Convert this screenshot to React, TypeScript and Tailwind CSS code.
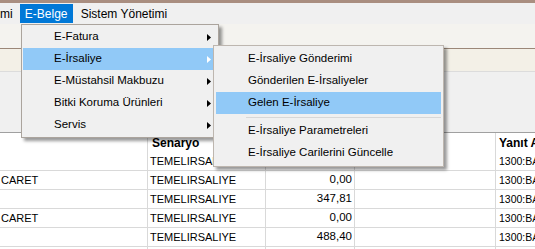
import React from 'react';

type Row = { a: string; b: string; c: string; e: string };

const rows: Row[] = [
  { a: '', b: 'TEMELIRSALIYE', c: '', e: '1300:BAŞARILI' },
  { a: 'CARET', b: 'TEMELIRSALIYE', c: '0,00', e: '1300:BAŞARILI' },
  { a: '', b: 'TEMELIRSALIYE', c: '347,81', e: '1300:BAŞARILI' },
  { a: 'CARET', b: 'TEMELIRSALIYE', c: '0,00', e: '1300:BAŞARILI' },
  { a: '', b: 'TEMELIRSALIYE', c: '488,40', e: '1300:BAŞARILI' },
  { a: '', b: '', c: '', e: '' },
];

const mainItems = ['E-Fatura', 'E-İrsaliye', 'E-Müstahsil Makbuzu', 'Bitki Koruma Ürünleri', 'Servis'];

const Arrow = ({ white }: { white?: boolean }) => (
  <svg width="4" height="7" viewBox="0 0 4 7" className="shrink-0">
    <polygon points="0,0 4,3.5 0,7" fill={white ? '#ffffff' : '#000000'} />
  </svg>
);

const SubItem = ({ label, active }: { label: string; active?: boolean }) => (
  <div className={`h-[22px] mx-[2px] pl-[32px] flex items-center ${active ? 'bg-[#91c9f7]' : ''}`}>
    {label}
  </div>
);

export default function App() {
  return (
    <div className="relative w-[535px] h-[249px] overflow-hidden bg-white text-black font-['Liberation_Sans',Arial,sans-serif]">
      <div className="h-[3px] bg-[#a98e80]" />

      {/* menu bar */}
      <div className="h-[21px] bg-[#f0f0f0] flex text-[12px] leading-none">
        <span className="flex items-center">mi</span>
        <span className="ml-[7px] my-[1px] w-[53px] bg-[#0078d7] text-white flex items-center justify-center">E-Belge</span>
        <span className="ml-[8px] flex items-center">Sistem Yönetimi</span>
      </div>

      <div className="h-[24px] bg-[#f4f3ef]" />
      <div className="h-px bg-[#9b8778]" />
      <div className="h-[22px] bg-[#f3f0e7]" />
      <div className="h-px bg-[#dcdcdc]" />
      <div className="h-[60px] bg-[#f0f0f0]" />
      <div className="h-px bg-[#a0a0a0]" />

      {/* grid */}
      <div className="text-[11px] leading-none">
        <div className="flex h-[19px] font-bold text-[12px]">
          <div className="w-[148px] shrink-0 border-r border-[#d9d9d9]" />
          <div className="w-[118px] shrink-0 border-r border-[#d9d9d9] pl-[4px] flex items-center">Senaryo</div>
          <div className="w-[89px] shrink-0 border-r border-[#d9d9d9]" />
          <div className="w-[141px] shrink-0 border-r border-[#d9d9d9]" />
          <div className="min-w-0 flex-1 pl-[3px] flex items-center whitespace-nowrap overflow-hidden">Yanıt Açıklaması</div>
        </div>
        {rows.map((r, i) => (
          <div key={i} className="flex h-[19px] border-b border-[#d9d9d9]">
            <div className="w-[148px] shrink-0 border-r border-[#d9d9d9] pl-[1px] flex items-center">{r.a}</div>
            <div className="w-[118px] shrink-0 border-r border-[#d9d9d9] pl-[2px] flex items-center">{r.b}</div>
            <div className="w-[89px] shrink-0 border-r border-[#d9d9d9] pr-[2px] flex items-center justify-end text-[11.5px]">{r.c}</div>
            <div className="w-[141px] shrink-0 border-r border-[#d9d9d9]" />
            <div className="min-w-0 flex-1 pl-[3px] flex items-center whitespace-nowrap overflow-hidden text-[10.5px]">{r.e}</div>
          </div>
        ))}
      </div>

      {/* E-Belge dropdown */}
      <div className="absolute left-[21px] top-[24px] w-[198px] bg-[#f0f0f0] border border-[#aba49d] py-px text-[11.5px] leading-none shadow-[3px_3px_3px_rgba(0,0,0,0.4)]">
        {mainItems.map((label, i) => (
          <div
            key={label}
            className={`h-[22px] mx-px pl-[31px] pr-[6px] flex items-center justify-between ${i === 1 ? 'bg-[#91c9f7]' : ''}`}
          >
            <span>{label}</span>
            <Arrow white={i === 1} />
          </div>
        ))}
      </div>

      {/* E-İrsaliye submenu */}
      <div className="absolute left-[213px] top-[45px] w-[231px] bg-[#f0f0f0] border border-[#bdb6af] py-[2px] text-[11.5px] leading-none shadow-[3px_3px_3px_rgba(0,0,0,0.4)]">
        <SubItem label="E-İrsaliye Gönderimi" />
        <SubItem label="Gönderilen E-İrsaliyeler" />
        <SubItem label="Gelen E-İrsaliye" active />
        <div className="h-[6px] flex items-center pl-[30px] mx-[2px]">
          <div className="h-px w-full bg-[#d7d7d7]" />
        </div>
        <SubItem label="E-İrsaliye Parametreleri" />
        <SubItem label="E-İrsaliye Carilerini Güncelle" />
      </div>
    </div>
  );
}
